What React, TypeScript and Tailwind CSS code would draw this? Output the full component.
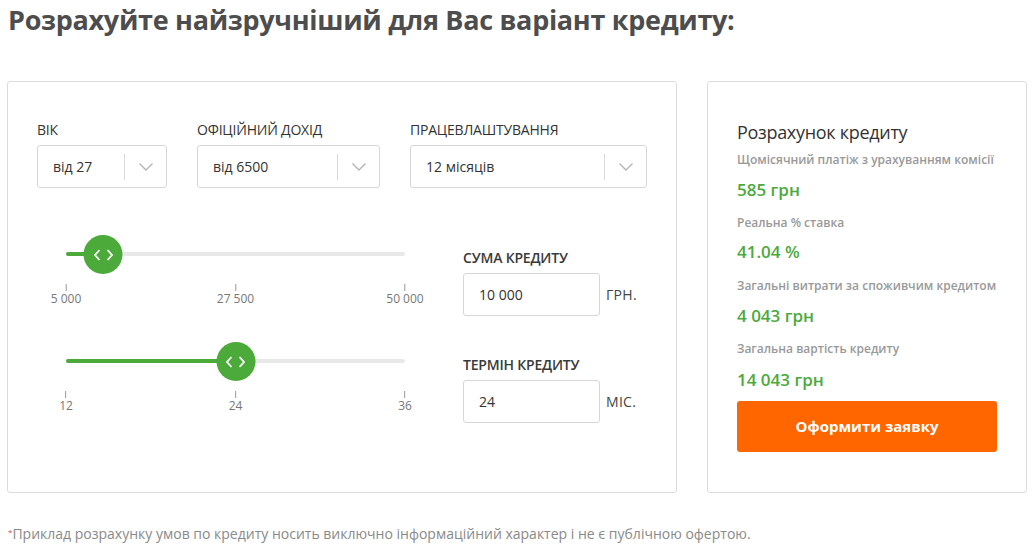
import React from "react";

const font = { fontFamily: '"Open Sans", "Noto Sans", sans-serif' };

function Chevron() {
  return (
    <svg width="16" height="10" viewBox="0 0 16 10" fill="none">
      <path d="M1.5 1.5 L8 8 L14.5 1.5" stroke="#b5b5b5" strokeWidth="1.4" />
    </svg>
  );
}

function Select({ label, value, width }: { label: string; value: string; width: string }) {
  return (
    <div className={`flex flex-col ${width}`}>
      <div className="text-[14px] text-[#333] uppercase leading-[20px] mb-[5px] tracking-[-0.2px]">{label}</div>
      <div className="h-[43px] border border-[#d7d7d7] rounded-[3px] flex items-center bg-white">
        <div className="flex-1 pl-[15px] text-[14px] text-[#333]">{value}</div>
        <div className="w-px h-[26px] bg-[#d9d9d9]"></div>
        <div className="w-[41px] flex items-center justify-center">
          <Chevron />
        </div>
      </div>
    </div>
  );
}

function Thumb() {
  return (
    <div className="w-[39px] h-[39px] rounded-full bg-[#4caa3b] flex items-center justify-center">
      <svg width="20" height="12" viewBox="0 0 20 12" fill="none">
        <path d="M6 1 L1.5 6 L6 11" stroke="white" strokeWidth="1.8" />
        <path d="M14 1 L18.5 6 L14 11" stroke="white" strokeWidth="1.8" />
      </svg>
    </div>
  );
}

function Slider({ pct, ticks }: { pct: number; ticks: string[] }) {
  return (
    <div className="w-[339px] ml-[29px]">
      <div className="relative h-[39px]">
        <div className="absolute left-0 right-0 top-[17px] h-[4px] bg-[#e8e8e8] rounded-full"></div>
        <div className="absolute left-0 top-[17px] h-[4px] bg-[#4caa3b] rounded-full" style={{ width: `${pct}%` }}></div>
        <div className="absolute top-0 -translate-x-1/2" style={{ left: `${pct}%` }}>
          <Thumb />
        </div>
      </div>
      <div className="relative h-[22px] mt-[10px]">
        {ticks.map((t, i) => (
          <div
            key={i}
            className="absolute top-0 -translate-x-1/2 flex flex-col items-center"
            style={{ left: `${i * 50}%` }}
          >
            <div className="w-px h-[7px] bg-[#999]"></div>
            <div className="text-[12px] text-[#777] leading-[14px] mt-[1px] whitespace-nowrap">{t}</div>
          </div>
        ))}
      </div>
    </div>
  );
}

function NumInput({ label, value, unit }: { label: string; value: string; unit: string }) {
  return (
    <div className="flex flex-col">
      <div className="text-[14px] font-semibold text-[#3a3a3a] uppercase leading-[20px] mb-[5px] tracking-[-0.2px]">{label}</div>
      <div className="flex items-center">
        <div className="w-[137px] h-[43px] border border-[#d7d7d7] rounded-[3px] flex items-center pl-[15px] text-[14px] text-[#333]">
          {value}
        </div>
        <div className="ml-[6px] text-[14px] text-[#444] tracking-[0.3px]">{unit}</div>
      </div>
    </div>
  );
}

const lbl = "text-[12px] font-semibold text-[#999] leading-[18px]";
const val = "text-[17px] font-semibold text-[#4caa3b] leading-[22px]";

export default function App() {
  return (
    <div className="w-[1034px] h-[556px] bg-white overflow-hidden" style={font}>
      <h1 className="pl-[8px] pt-0 text-[27px] font-bold text-[#4d4d4d] leading-[40px] tracking-[-0.3px]">
        Розрахуйте найзручніший для Вас варіант кредиту:
      </h1>
      <div className="flex mt-[41px] pl-[7px] gap-[30px]">
        <div className="w-[670px] h-[412px] border border-[#dcdcdc] rounded-[3px] pl-[29px] pt-[38px]">
          <div className="flex gap-[30px]">
            <Select label="Вік" value="від 27" width="w-[130px]" />
            <Select label="Офіційний дохід" value="від 6500" width="w-[183px]" />
            <Select label="Працевлаштування" value="12 місяців" width="w-[237px]" />
          </div>
          <div className="flex mt-[38px]">
            <div className="flex flex-col">
              <div className="mt-[9px]">
                <Slider pct={11} ticks={["5 000", "27 500", "50 000"]} />
              </div>
              <div className="mt-[36px]">
                <Slider pct={50} ticks={["12", "24", "36"]} />
              </div>
            </div>
            <div className="flex flex-col ml-[58px] gap-[39px] mt-[22px]">
              <NumInput label="Сума кредиту" value="10 000" unit="ГРН." />
              <NumInput label="Термін кредиту" value="24" unit="МІС." />
            </div>
          </div>
        </div>
        <div className="w-[320px] h-[412px] border border-[#dcdcdc] rounded-[3px] pl-[29px] pt-[37px]">
          <div className="text-[18px] text-[#333] leading-[26px] font-medium tracking-[-0.3px]">Розрахунок кредиту</div>
          <div className={`mt-[6px] ${lbl}`}>Щомісячний платіж з урахуванням комісії</div>
          <div className={`mt-[10px] ${val}`}>585 грн</div>
          <div className={`mt-[13px] ${lbl}`}>Реальна % ставка</div>
          <div className={`mt-[9px] ${val}`}>41.04 %</div>
          <div className={`mt-[14px] ${lbl}`}>Загальні витрати за споживчим кредитом</div>
          <div className={`mt-[10px] ${val}`}>4 043 грн</div>
          <div className={`mt-[13px] ${lbl}`}>Загальна вартість кредиту</div>
          <div className={`mt-[11px] ${val}`}>14 043 грн</div>
          <button className="mt-[10px] w-[260px] h-[51px] bg-[#ff6600] rounded-[3px] text-white text-[15px] font-bold">
            Оформити заявку
          </button>
        </div>
      </div>
      <div className="pl-[8px] mt-[31px] text-[14px] text-[#8a8a8a] leading-[20px]" style={{ fontFamily: '"Liberation Sans Narrow", "Open Sans", sans-serif' }}>
        <sup className="text-[#e64a3b] text-[8px]">*</sup>Приклад розрахунку умов по кредиту носить виключно інформаційний характер і не є публічною офертою.
      </div>
    </div>
  );
}
